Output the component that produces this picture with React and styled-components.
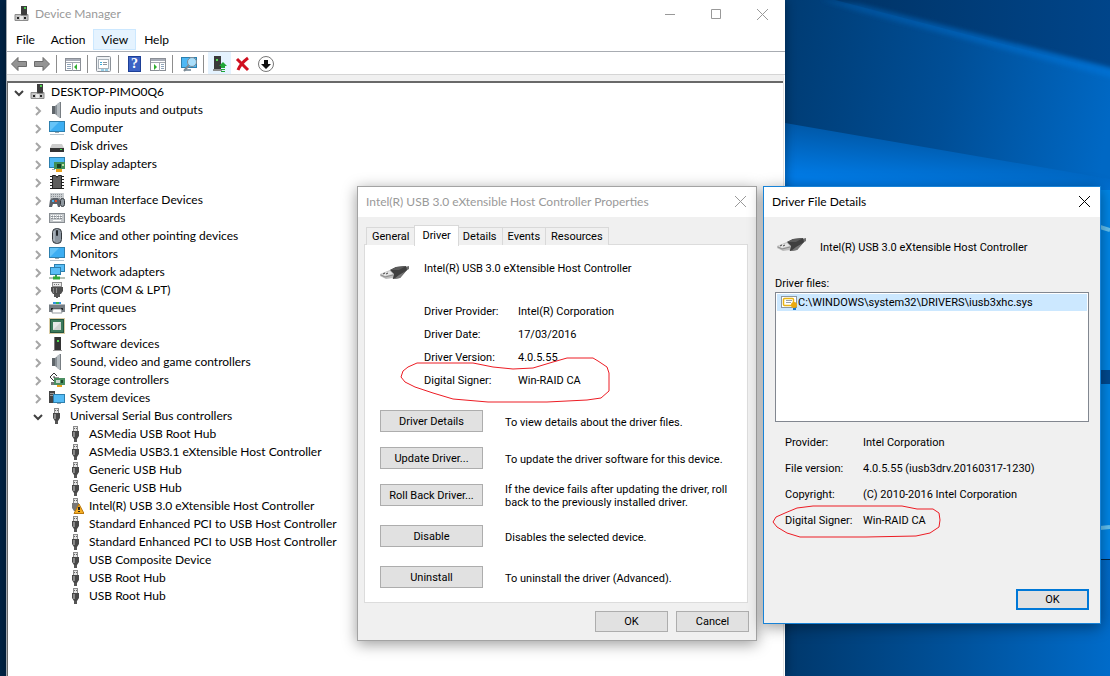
import styled, { createGlobalStyle } from "styled-components"
import { useState } from "react"

const segoe = `Lato, "Open Sans", sans-serif`
const shell = `Roboto, "Liberation Sans", sans-serif`


// 16x16 drawings used in the tree and in the toolbar
const glyphs = {
    pc: <>
        <rect x="7" y="0" width="6" height="10" fill="#3d3d3d" />
        <rect x="10" y="1" width="2" height="2" fill="#4ccb4c" />
        <path d="M3 8.500h4v1h6v-1h1v6H1v-6z" fill="#c4c4c4" stroke="#8c8c8c" />
        <rect x="3" y="11" width="2" height="2" fill="#222" />
        <rect x="10" y="11" width="2" height="2" fill="#222" />
        <rect x="6" y="10" width="3" height="4" fill="#e8e8e8" />
    </>,
    speaker: <>
        <path d="M3 4h3v8H3z" fill="#5f656a" />
        <path d="M6 4l5-4v16l-5-4z" fill="#868d93" />
        <path d="M8 2l3-2v16l-3-2z" fill="#b3babf" />
        <path d="M11.500 0v16" stroke="#777d82" />
    </>,
    monitor: <>
        <rect x="0.500" y="1.500" width="15" height="10" fill="#3daef2" stroke="#2d7fae" />
        <path d="M1 11V2h9z" fill="#66c4f8" />
        <path d="M6 12h4v1H6z" fill="#9aa7b0" />
        <path d="M1 14.500h14" stroke="#b6c3cc" />
    </>,
    display: <>
        <rect x="0.500" y="1.500" width="15" height="10" fill="#4db8f5" stroke="#2d7fae" />
        <path d="M3 13.500h3" stroke="#9aa7b0" />
        <rect x="5" y="6" width="11" height="7" fill="#3f8f58" />
        <rect x="8" y="8" width="4" height="4" fill="#163f28" />
        <rect x="13" y="8" width="2" height="2" fill="#bfe0a0" />
        <path d="M7 13h6v3H7z" fill="#e9a21d" />
    </>,
    disk: <>
        <path d="M3 6h10l2 4H1z" fill="#cdcdcd" />
        <rect x="1" y="10" width="14" height="4" fill="#343434" />
        <rect x="11" y="11" width="2" height="1" fill="#45e04a" />
    </>,
    chip: <>
        <path d="M1 2.500h14M1 5.500h14M1 8.500h14M1 11.500h14M1 14.500h14" stroke="#222" />
        <path d="M3.500 1.500h3l1.500 2 1.500-2h3v13h-9z" fill="#5d5d5d" stroke="#222" />
    </>,
    hid: <>
        <rect x="1" y="1" width="14" height="7" fill="#c9cdd0" />
        <path d="M2 2.500h12M2 4.500h12M2 6.500h12" stroke="#8b9095" strokeDasharray="1 1" />
        <path d="M1 8l3-2h5l2 2v7H9l-1-3H4l-1 3H0z" fill="#5b6169" />
        <rect x="3" y="8" width="2" height="2" fill="#4fb2f0" />
        <rect x="6" y="8" width="2" height="2" fill="#e04f32" />
        <rect x="11.500" y="6.500" width="4" height="8" rx="2" fill="#8f989f" stroke="#33383d" />
    </>,
    keyboard: <>
        <rect x="0.500" y="3.500" width="15" height="9" fill="#c4c8cb" stroke="#888d92" />
        <path d="M2 5.500h12M2 7.500h12" stroke="#fff" strokeDasharray="1 1" />
        <path d="M2 6.500h12M2 8.500h12" stroke="#8b9095" strokeDasharray="2 1" />
        <path d="M4 10.500h8" stroke="#fff" />
    </>,
    mouse: <>
        <rect x="3.500" y="0.500" width="9" height="15" rx="4" fill="#8d97a1" stroke="#33383d" />
        <path d="M5 3v10" stroke="#c0c7cd" />
        <rect x="7" y="2" width="2" height="6" rx="1" fill="#22262a" />
    </>,
    network: <>
        <rect x="5.500" y="0.500" width="10" height="7" fill="#58bdf6" stroke="#2d7fae" />
        <rect x="1.500" y="3.500" width="10" height="7" fill="#58bdf6" stroke="#2d7fae" />
        <path d="M7 11v3" stroke="#3f9e46" strokeWidth="2" />
        <path d="M0 14h16" stroke="#b8c4ba" strokeWidth="2" />
        <path d="M4 14h7" stroke="#2fa83a" strokeWidth="3" />
    </>,
    port: <>
        <rect x="3.500" y="0.500" width="9" height="4" fill="#e8e8e8" stroke="#8c8c8c" />
        <path d="M5 2.500h6" stroke="#777" strokeDasharray="1 1" />
        <path d="M2 5h12v4l-2 3H4L2 9z" fill="#4f4f4f" />
        <path d="M4.500 6v5M7.500 6v5" stroke="#8a8a8a" />
        <path d="M5 12h2v3H5zM7 12h2v4H7zM9 12h2v3H9z" fill="#555" />
    </>,
    printer: <>
        <path d="M4 5V2h8v3z" fill="#2f96e0" />
        <path d="M7 2h3v3H7z" fill="#32b45a" />
        <rect x="0" y="4" width="16" height="8" fill="#777d83" />
        <path d="M0 4.500h16" stroke="#b5babf" />
        <rect x="2" y="8" width="12" height="2" fill="#202326" />
        <path d="M4 9h8l1 4H3z" fill="#fff" stroke="#9a9fa4" />
    </>,
    cpu: <>
        <rect x="0.500" y="0.500" width="15" height="15" fill="none" stroke="#b49a4a" strokeDasharray="1 1" />
        <rect x="1.500" y="1.500" width="13" height="13" fill="#3c7a5a" stroke="#245540" />
        <rect x="4" y="4" width="8" height="8" fill="#cfd2d0" />
        <path d="M4 12V4h8z" fill="#e6e8e7" />
    </>,
    software: <>
        <rect x="5" y="1" width="7" height="14" fill="#333" />
        <path d="M5 1h1v14H5z" fill="#777" />
        <rect x="8" y="4" width="2" height="2" fill="#4fe04f" />
        <path d="M4 14.500h9" stroke="#999" />
    </>,
    storage: <>
        <path d="M8 4L5 1 1 5l4 4 3-2M5 4v2h5" fill="none" stroke="#333" />
        <rect x="5" y="6" width="11" height="7" fill="#4c8f62" />
        <rect x="7" y="8" width="4" height="3" fill="#cbd7cf" />
        <rect x="12" y="8" width="2" height="3" fill="#1c4a2d" />
        <path d="M2 10h3v3H2z" fill="#777" />
        <path d="M8 13h5v2H8z" fill="#e9a21d" />
    </>,
    system: <>
        <rect x="0" y="1" width="6" height="12" fill="#444" />
        <path d="M1 3.500h4M1 5.500h4" stroke="#999" />
        <rect x="4.500" y="4.500" width="11" height="8" fill="#54bbf5" stroke="#2d7fae" />
        <path d="M8 13h4v1H8z" fill="#9aa7b0" />
    </>,
    usb: <>
        <rect x="5.500" y="0.500" width="4" height="5" fill="#e4e4e4" stroke="#8a8a8a" />
        <path d="M6 2.500h3" stroke="#666" strokeDasharray="1 1" />
        <path d="M4 5h7v5l-2 3H6l-2-3z" fill="#484848" />
        <path d="M6 6v5" stroke="#888" strokeWidth="2" />
        <path d="M6 13h3v3H6z" fill="#555" />
    </>,
    usbWarn: <>
        <rect x="5.500" y="0.500" width="4" height="5" fill="#e4e4e4" stroke="#8a8a8a" />
        <path d="M6 2.500h3" stroke="#666" strokeDasharray="1 1" />
        <path d="M4 5h7v5l-2 3H6l-2-3z" fill="#777" />
        <path d="M11 6l5 9.500H6z" fill="#f5ae24" stroke="#b9770d" />
        <path d="M11 9v3M11 13v1" stroke="#222" strokeWidth="2" />
    </>,
    back: <path d="M0.500 8L7 1.500v4h8.500v5H7v4z" fill="#949494" stroke="#6b6b6b" />,
    forward: <path d="M15.500 8L9 1.500v4H0.500v5H9v4z" fill="#949494" stroke="#6b6b6b" />,
    consoleTree: <>
        <rect x="0.500" y="2.500" width="15" height="12" fill="#fff" stroke="#8b8f96" />
        <path d="M1 4h14" stroke="#a8adb8" strokeWidth="2" />
        <path d="M1 6.500h14M7.500 7v8" stroke="#a3a8b0" />
        <path d="M2 8.500h4M2 10.500h4M2 12.500h4" stroke="#8fa5bb" />
        <path d="M12 8v6l-3-3z" fill="#2fae2f" />
    </>,
    properties: <>
        <rect x="0.500" y="0.500" width="14" height="15" rx="1" fill="#eef1f4" stroke="#8b9198" />
        <rect x="2.500" y="3.500" width="10" height="9" fill="#fff" stroke="#a9b2ba" />
        <path d="M4 6.500h2M4 8.500h2" stroke="#3cabd9" />
        <path d="M7 6.500h4M7 8.500h4" stroke="#8b949c" />
        <path d="M5 14h3M9 14h3" stroke="#3cabd9" />
    </>,
    actionPane: <>
        <rect x="0.500" y="2.500" width="15" height="12" fill="#fff" stroke="#8b8f96" />
        <path d="M1 4h14" stroke="#a8adb8" strokeWidth="2" />
        <path d="M1 6.500h14M9.500 7v8" stroke="#a3a8b0" />
        <path d="M11 8.500h3M11 10.500h3M11 12.500h3" stroke="#8fa5bb" />
        <path d="M4 8v6l3-3z" fill="#2fae2f" />
    </>,
    scan: <>
        <rect x="0.500" y="1.500" width="15" height="10" fill="#4db8f5" stroke="#2d7fae" />
        <path d="M3 14h7" stroke="#8fa0ac" strokeWidth="2" />
        <path d="M8 9l-5 6" stroke="#7d8a94" strokeWidth="2" />
        <circle cx="11" cy="6" r="4.500" fill="#a9defa" stroke="#7d8a94" />
    </>,
    update: <>
        <rect x="2" y="0" width="7" height="13" fill="#3a3a3a" />
        <rect x="4" y="3" width="2" height="2" fill="#52dd52" />
        <path d="M1 14h9" stroke="#8c8c8c" strokeWidth="2" />
        <path d="M11 6l4 4h-2v2H9v-2H7zM9 13h4v1H9zM9 15h4v1H9z" fill="#1fa637" />
    </>,
    uninstall: <path d="M2 3l11 11M13 2C9 5 5 9 3 14" fill="none" stroke="#d01020" strokeWidth="3" />,
    disable: <>
        <circle cx="8" cy="8" r="7.500" fill="#fff" stroke="#777" />
        <path d="M6 4h4v4h3l-5 5-5-5h3z" fill="#111" />
    </>,
}

const Icon = ({ name }) => (
    <svg width="16" height="16" viewBox="0 0 16 16" aria-hidden="true">{glyphs[name]}</svg>
)

const Chevron = ({ open }) => (
    <svg width="10" height="10" viewBox="0 0 10 10" fill="none" aria-hidden="true">
        {open
            ? <path d="M1 3l4 4 4-4" stroke="#404040" strokeWidth="2" />
            : <path d="M3 1l4 4-4 4" stroke="#a6a6a6" strokeWidth="2" />}
    </svg>
)

const Cross = () => (
    <svg width="11" height="11" viewBox="0 0 11 11" stroke="currentColor" aria-hidden="true">
        <path d="M0 0l11 11M11 0L0 11" />
    </svg>
)

const UsbPlug = () => (
    <svg width="30" height="16" viewBox="0 0 30 16" aria-hidden="true">
        <path d="M25 2l4-1v3l-5 3z" fill="#6e6e6e" />
        <path d="M10 5l6-3 10-1 1 4-7 8-7 1z" fill="#3f3f3f" />
        <path d="M10 5l6-3 10-1-7 4z" fill="#5a5a5a" />
        <path d="M14 14l6-1 6-7-7 4z" fill="#777" />
        <path d="M0 9l10-4 4 4-1 4-7 1-6-3z" fill="#bdbdbd" />
        <path d="M1 9l9-3 3 3-8 2z" fill="#e4e4e4" />
        <path d="M1 10l4 2 8-2" fill="none" stroke="#8c8c8c" />
        <path d="M3 9l2-1M6 9l2-1" stroke="#444" />
    </svg>
)

const Certificate = () => (
    <svg width="16" height="14" viewBox="0 0 16 14" aria-hidden="true">
        <rect x="0.500" y="0.500" width="15" height="11" fill="#fff" stroke="#8d969e" />
        <rect x="2.500" y="2.500" width="10" height="7" rx="1" fill="#fff" stroke="#e8b414" strokeWidth="1.500" />
        <path d="M5 4.500h6M5 6.500h5" stroke="#9aa2a8" />
        <path d="M12 10h3v4h-3z" fill="#1b76c9" />
        <circle cx="13" cy="9" r="3" fill="#eba90e" />
    </svg>
)

const Wallpaper = () => (
    <Backdrop viewBox="0 0 1110 676" preserveAspectRatio="xMaxYMin slice" aria-hidden="true">
        <defs>
            <linearGradient id="sky" x1="785" x2="1110" y1="0" y2="0" gradientUnits="userSpaceOnUse">
                <stop offset="0" stopColor="#00305f" />
                <stop offset="1" stopColor="#00458a" />
            </linearGradient>
            <linearGradient id="beam" x1="785" x2="1110" y1="60" y2="110" gradientUnits="userSpaceOnUse">
                <stop offset="0" stopColor="#003c74" />
                <stop offset="0.500" stopColor="#004e96" />
                <stop offset="1" stopColor="#0068c4" />
            </linearGradient>
            <linearGradient id="glow" x1="785" x2="780" y1="120" y2="175" gradientUnits="userSpaceOnUse">
                <stop offset="0" stopColor="#0056a4" />
                <stop offset="1" stopColor="#007be6" />
            </linearGradient>
            <linearGradient id="edge" x1="800" x2="1110" y1="0" y2="0" gradientUnits="userSpaceOnUse">
                <stop offset="0" stopColor="#0054a0" stopOpacity="0.500" />
                <stop offset="1" stopColor="#006fd0" />
            </linearGradient>
            <linearGradient id="floor" x1="785" x2="1110" y1="0" y2="0" gradientUnits="userSpaceOnUse">
                <stop offset="0" stopColor="#00386c" />
                <stop offset="0.500" stopColor="#005098" />
                <stop offset="1" stopColor="#006bc9" />
            </linearGradient>
            <filter id="soft"><feGaussianBlur stdDeviation="2" /></filter>
        </defs>
        <rect width="1110" height="676" fill="#002447" />
        <rect x="785" width="325" height="190" fill="url(#sky)" />
        <path d="M785 0h50L1110 72v112H785z" fill="url(#beam)" />
        <path d="M820 0L860 4 1120 70v10L860 12z" fill="url(#edge)" filter="url(#soft)" />
        <path d="M785 123L1110 179v380H785z" fill="url(#glow)" />
        <path d="M1100 190h10v360h-10z" fill="#0086e6" />
        <path d="M1100 227l10 3M1100 528l10-1" stroke="#64c3f2" strokeWidth="4" />
        <rect x="1100" y="370" width="10" height="14" fill="#004a90" />
        <rect x="785" y="560" width="325" height="116" fill="url(#floor)" />
    </Backdrop>
)


const groups = [
    ["speaker", "Audio inputs and outputs"],
    ["monitor", "Computer"],
    ["disk", "Disk drives"],
    ["display", "Display adapters"],
    ["chip", "Firmware"],
    ["hid", "Human Interface Devices"],
    ["keyboard", "Keyboards"],
    ["mouse", "Mice and other pointing devices"],
    ["monitor", "Monitors"],
    ["network", "Network adapters"],
    ["port", "Ports (COM & LPT)"],
    ["printer", "Print queues"],
    ["cpu", "Processors"],
    ["software", "Software devices"],
    ["speaker", "Sound, video and game controllers"],
    ["storage", "Storage controllers"],
    ["system", "System devices"],
]

const usbDevices = [
    "ASMedia USB Root Hub",
    "ASMedia USB3.1 eXtensible Host Controller",
    "Generic USB Hub",
    "Generic USB Hub",
    "Intel(R) USB 3.0 eXtensible Host Controller",
    "Standard Enhanced PCI to USB Host Controller",
    "Standard Enhanced PCI to USB Host Controller",
    "USB Composite Device",
    "USB Root Hub",
    "USB Root Hub",
]

const tools = [
    "back", "forward", "|", "consoleTree", "|", "properties", "|",
    "help", "actionPane", "|", "scan", "|", "update", "uninstall", "disable",
]

const actions = [
    { label: "Driver Details", text: "To view details about the driver files." },
    { label: "Update Driver...", text: "To update the driver software for this device." },
    { label: "Roll Back Driver...", text: "If the device fails after updating the driver, roll back to the previously installed driver." },
    { label: "Disable", text: "Disables the selected device.", spaced: true },
    { label: "Uninstall", text: "To uninstall the driver (Advanced).", spaced: true },
]

const TreeItem = ({ icon, label, level, open, onToggle, leaf, children }) => (
    <li role="treeitem" aria-expanded={leaf ? undefined : !!open}>
        <Row $level={level}>
            <Toggle as={leaf ? "span" : "button"} onClick={onToggle} aria-label={leaf ? undefined : label}>
                {!leaf && <Chevron open={open} />}
            </Toggle>
            <Icon name={icon} />
            <span>{label}</span>
        </Row>
        {open && children}
    </li>
)

const DeviceManager = () => {
    let [rootOpen, setRootOpen] = useState(true)
    let [usbOpen, setUsbOpen] = useState(true)

    return (
        <Manager>
            <ManagerTitle>
                <Icon name="pc" />
                <h1>Device Manager</h1>
                <CaptionButton $width={46} $muted aria-label="Minimize">
                    <svg width="10" height="10" viewBox="0 0 10 10" stroke="currentColor"><path d="M0 5.500h10" /></svg>
                </CaptionButton>
                <CaptionButton $width={46} $muted aria-label="Maximize">
                    <svg width="10" height="10" viewBox="0 0 10 10" stroke="currentColor" fill="none"><path d="M0.500 0.500h9v9h-9z" /></svg>
                </CaptionButton>
                <CaptionButton $width={46} $muted aria-label="Close"><Cross /></CaptionButton>
            </ManagerTitle>
            <MenuBar>
                {["File", "Action", "View", "Help"].map(item => (
                    <MenuItem key={item} $hot={item === "View"}>{item}</MenuItem>
                ))}
            </MenuBar>
            <Toolbar>
                {tools.map((tool, i) => tool === "|"
                    ? <Separator key={i} />
                    : (
                        <ToolButton key={i} $hot={tool === "update"} aria-label={tool}>
                            {tool === "help" ? <HelpMark>?</HelpMark> : <Icon name={tool} />}
                        </ToolButton>
                    ))}
            </Toolbar>
            <TreePane>
                <Tree role="tree">
                    <TreeItem icon="pc" label="DESKTOP-PIMO0Q6" level={0} open={rootOpen} onToggle={() => setRootOpen(!rootOpen)}>
                        <Tree role="group">
                            {groups.map(([icon, label]) => (
                                <TreeItem key={label} icon={icon} label={label} level={1} />
                            ))}
                            <TreeItem icon="usb" label="Universal Serial Bus controllers" level={1} open={usbOpen} onToggle={() => setUsbOpen(!usbOpen)}>
                                <Tree role="group">
                                    {usbDevices.map((label, i) => (
                                        <TreeItem key={i} icon={label.startsWith("Intel") ? "usbWarn" : "usb"} label={label} level={2} leaf />
                                    ))}
                                </Tree>
                            </TreeItem>
                        </Tree>
                    </TreeItem>
                </Tree>
            </TreePane>
        </Manager>
    )
}

const PropertiesDialog = () => (
    <Properties role="dialog">
        <DialogTitle $muted>
            <h2>Intel(R) USB 3.0 eXtensible Host Controller Properties</h2>
            <CaptionButton $width={30} $muted aria-label="Close"><Cross /></CaptionButton>
        </DialogTitle>
        <Tabs role="tablist">
            {["General", "Driver", "Details", "Events", "Resources"].map(tab => (
                <Tab key={tab} role="tab" aria-selected={tab === "Driver"} $active={tab === "Driver"}>{tab}</Tab>
            ))}
        </Tabs>
        <TabPanel role="tabpanel">
            <DeviceHeading>
                <UsbPlug />
                <span>Intel(R) USB 3.0 eXtensible Host Controller</span>
            </DeviceHeading>
            <DriverFacts>
                <dt>Driver Provider:</dt><dd>Intel(R) Corporation</dd>
                <dt>Driver Date:</dt><dd>17/03/2016</dd>
                <dt>Driver Version:</dt><dd>4.0.5.55</dd>
                <dt>Digital Signer:</dt><dd>Win-RAID CA</dd>
            </DriverFacts>
            {actions.map(({ label, text, spaced }) => (
                <ActionRow key={label} $spaced={spaced}>
                    <Button>{label}</Button>
                    <p>{text}</p>
                </ActionRow>
            ))}
        </TabPanel>
        <DialogButtons>
            <Button>OK</Button>
            <Button>Cancel</Button>
        </DialogButtons>
        <PenMark $left={42} $top={170} width="212" height="48" viewBox="400 357 212 48">
            <path d="M401 377L403 371L408 367L417 363H473L493 367L513 369L533 368L553 362L567 358H593L598 361L607 367L609 373V391L601 398L587 400L547 402H488L453 399L433 393L415 387L405 382Z" />
        </PenMark>
    </Properties>
)

const FileDetailsDialog = () => (
    <FileDetails role="dialog">
        <DialogTitle>
            <h2>Driver File Details</h2>
            <CaptionButton $width={30} aria-label="Close"><Cross /></CaptionButton>
        </DialogTitle>
        <FileHeading>
            <UsbPlug />
            <span>Intel(R) USB 3.0 eXtensible Host Controller</span>
        </FileHeading>
        <ListLabel id="driver-files">Driver files:</ListLabel>
        <FileList role="listbox" aria-labelledby="driver-files">
            <FileItem role="option" aria-selected="true">
                <Certificate />
                <span>C:\WINDOWS\system32\DRIVERS\iusb3xhc.sys</span>
            </FileItem>
        </FileList>
        <FileFacts>
            <dt>Provider:</dt><dd>Intel Corporation</dd>
            <dt>File version:</dt><dd>4.0.5.55 (iusb3drv.20160317-1230)</dd>
            <dt>Copyright:</dt><dd>(C) 2010-2016 Intel Corporation</dd>
            <dt>Digital Signer:</dt><dd>Win-RAID CA</dd>
        </FileFacts>
        <FileButtons>
            <Button $primary>OK</Button>
        </FileButtons>
        <PenMark $left={8} $top={318} width="170" height="34" viewBox="772 505 170 34">
            <path d="M773 522L776 517L785 513L797 508L813 506H902L917 509H933L939 513L940 520L939 527L930 533L916 536L866 537H800L787 533L777 527Z" />
        </PenMark>
    </FileDetails>
)

const App = () => {
    return (
        <Desktop>
            <GlobalStyle />
            <Wallpaper />
            <DeviceManager />
            <PropertiesDialog />
            <FileDetailsDialog />
        </Desktop>
    )
}

export default App

const GlobalStyle = createGlobalStyle`
    *{
        box-sizing: border-box;
    }
    body{
        margin: 0;
        color: #000;
        font: 12px/18px ${segoe};
    }
    h1, h2, p, ul, dl, dd{
        margin: 0;
        padding: 0;
        font-size: inherit;
        font-weight: normal;
    }
    button{
        margin: 0;
        padding: 0;
        border: none;
        background: none;
        color: inherit;
        font: inherit;
    }
    svg{
        display: block;
        flex: none;
    }
`

const Desktop = styled.main`
    position: relative;
    display: flex;
    min-height: 100vh;
    padding: 0 325px 0 6px;
    overflow: hidden;
`

const Backdrop = styled.svg`
    position: absolute;
    top: 0;
    left: 0;
    width: 100%;
    height: 100%;
`

const Manager = styled.section`
    position: relative;
    flex: 1;
    display: flex;
    flex-direction: column;
    background: #fff;
    border-left: 1px solid #a0a6ad;
    box-shadow: 0 0 10px rgba(0, 0, 0, 0.4);
`

const ManagerTitle = styled.header`
    display: flex;
    align-items: center;
    height: 28px;
    padding-left: 7px;
    color: #999;
    h1{
        flex: 1;
        margin-left: 5px;
    }
`

const CaptionButton = styled.button`
    display: flex;
    align-items: center;
    justify-content: center;
    align-self: stretch;
    width: ${({ $width }) => $width}px;
    color: ${({ $muted }) => $muted ? "#999" : "#000"};
`

const MenuBar = styled.nav`
    display: flex;
    height: 24px;
    padding: 1px 0 1px 1px;
    border-bottom: 1px solid #a8acb2;
`

const MenuItem = styled.button`
    padding: 0 7px;
    border: 1px solid ${({ $hot }) => $hot ? "#cce8ff" : "transparent"};
    background: ${({ $hot }) => $hot ? "#e5f3ff" : "none"};
`

const Toolbar = styled.div`
    display: flex;
    height: 23px;
    border-bottom: 1px solid #d5d5d5;
`

const ToolButton = styled.button`
    display: flex;
    align-items: center;
    justify-content: center;
    width: 23px;
    background: ${({ $hot }) => $hot ? "#e5f3ff" : "none"};
    padding-top: 2px;
`

const Separator = styled.span`
    width: 1px;
    margin: 3px 4px 1px 3px;
    background: #8d8d8d;
`

const HelpMark = styled.span`
    width: 13px;
    height: 16px;
    border: 1px solid #1d3f96;
    background: #3c62c4;
    color: #fff;
    font: bold 14px/14px "Liberation Serif", serif;
    text-align: center;
`

const TreePane = styled.div`
    flex: 1;
    margin-right: 1px;
    border-top: 6px solid #f0f0f0;
    border-right: 1px solid #e3e3e3;
`

const Tree = styled.ul`
    list-style: none;
    &[role="tree"]{
        min-height: 100%;
        border-top: 2px solid #696969;
        border-left: 1px solid #696969;
    }
`

const Row = styled.div`
    display: flex;
    align-items: center;
    height: 18px;
    padding-left: ${({ $level }) => 3 + $level * 19}px;
    white-space: nowrap;
    span:last-child{
        margin-left: 5px;
    }
`

const Toggle = styled.button`
    display: flex;
    justify-content: center;
    width: 16px;
    margin-right: 3px;
    padding-top: 2px;
`

const Dialog = styled.section`
    position: absolute;
    top: 186px;
    background: #f0f0f0;
    font: 11px/13px ${shell};
    box-shadow: 0 3px 14px rgba(0, 0, 0, 0.4);
`

const Properties = styled(Dialog)`
    left: 357px;
    width: 400px;
    border: 1px solid #a3a3a3;
`

const FileDetails = styled(Dialog)`
    left: 763px;
    width: 338px;
    border: 1px solid #1883d7;
`

const DialogTitle = styled.header`
    display: flex;
    align-items: center;
    justify-content: space-between;
    height: 30px;
    padding: 0 1px 2px 8px;
    background: #fff;
    color: ${({ $muted }) => $muted ? "#999" : "#000"};
    font: 12px/18px ${segoe};
    white-space: nowrap;
    h2{
        padding-top: 2px;
    }
`

const Tabs = styled.div`
    display: flex;
    align-items: flex-end;
    height: 28px;
    padding: 0 8px;
`

const Tab = styled.button`
    position: relative;
    height: ${({ $active }) => $active ? 21 : 18}px;
    margin: ${({ $active }) => $active ? "0 -1px -1px" : "0 0 0 -1px"};
    padding: ${({ $active }) => $active ? "0 7px 2px" : "0 5px"};
    border: 1px solid #d9d9d9;
    border-bottom: none;
    background: ${({ $active }) => $active ? "#fff" : "#f0f0f0"};
    z-index: ${({ $active }) => $active ? 1 : 0};
    &:first-child{
        margin-left: 0;
    }
`

const TabPanel = styled.div`
    margin: -1px 8px 0 6px;
    padding: 15px 15px 14px;
    border: 1px solid #dcdcdc;
    background: #fff;
`

const DeviceHeading = styled.div`
    display: flex;
    gap: 14px;
    height: 40px;
    svg{
        margin-top: 5px;
    }
    span{
        padding-top: 2px;
    }
`

const DriverFacts = styled.dl`
    display: grid;
    grid-template-columns: 94px 1fr;
    grid-auto-rows: 23px;
    align-items: center;
    margin-bottom: 18px;
    padding-left: 44px;
`

const ActionRow = styled.div`
    display: grid;
    grid-template: 22px / 103px 1fr;
    column-gap: 22px;
    align-items: center;
    margin-top: ${({ $spaced }) => $spaced ? 19 : 15}px;
    p{
        padding-top: 2px;
    }
`

const Button = styled.button`
    height: ${({ $primary }) => $primary ? 21 : 22}px;
    border: ${({ $primary }) => $primary ? "2px solid #0078d7" : "1px solid #adadad"};
    background: #e1e1e1;
`

const DialogButtons = styled.footer`
    display: flex;
    justify-content: flex-end;
    gap: 8px;
    padding: 8px 7px;
    ${Button}{
        width: 73px;
        height: 21px;
    }
`

const FileButtons = styled(DialogButtons)`
    padding: 56px 11px 13px;
`

const FileHeading = styled.div`
    display: flex;
    align-items: center;
    gap: 13px;
    height: 60px;
    padding-left: 13px;
    svg{
        margin-bottom: 4px;
    }
`

const ListLabel = styled.div`
    padding-left: 11px;
`

const FileList = styled.ul`
    height: 130px;
    margin: 2px 11px 7px;
    padding: 1px;
    border: 1px solid #828790;
    background: #fff;
    list-style: none;
`

const FileItem = styled.li`
    display: flex;
    align-items: center;
    gap: 1px;
    height: 17px;
    padding-left: 4px;
    background: #cce8ff;
`

const FileFacts = styled.dl`
    display: grid;
    grid-template-columns: 78px 1fr;
    grid-auto-rows: 26px;
    align-items: center;
    padding-left: 21px;
`

const PenMark = styled.svg.attrs({ "aria-hidden": true })`
    position: absolute;
    left: ${({ $left }) => $left}px;
    top: ${({ $top }) => $top}px;
    fill: none;
    stroke: #ed1c24;
    pointer-events: none;
`
